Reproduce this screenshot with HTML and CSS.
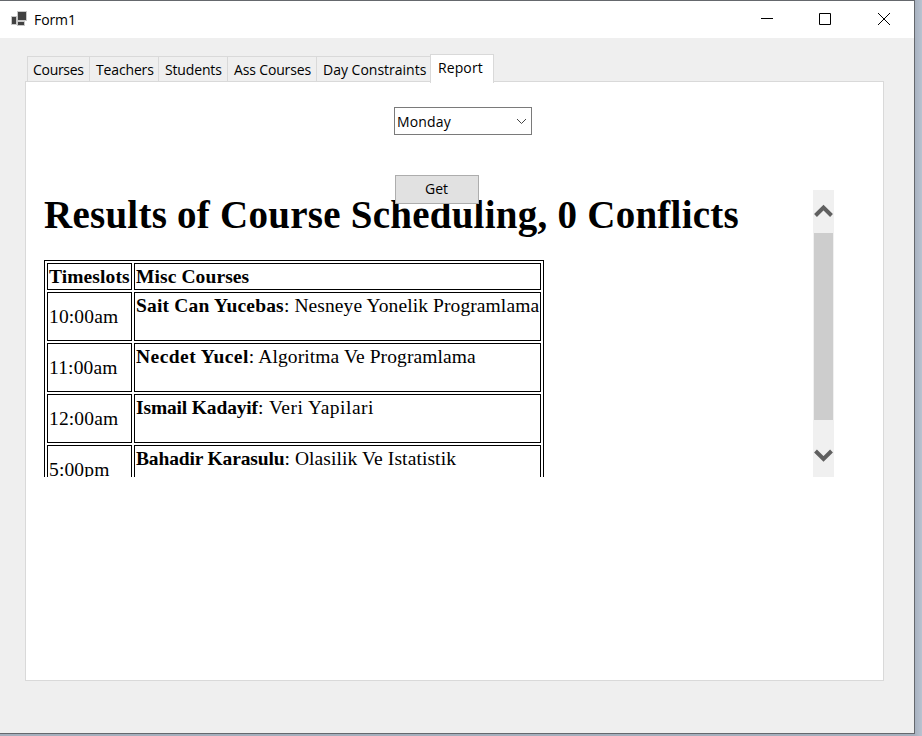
FILE: index.html
```html
<!DOCTYPE html>
<html lang="en">
<head>
<meta charset="utf-8">
<title>Form1</title>
<link rel="stylesheet" href="styles.css">
</head>
<body>
<div class="window">
  <header class="titlebar">
    <svg class="app-icon" width="18" height="16" viewBox="0 0 18 16"><path fill="#c8c8c8" d="M6 0h10v10H6zM0 5h6v9H0zM6 10h8v5H6z"/><path fill="#414141" d="M7 1h8v8H7zM1 6h4v7H1zM7 11h6v3H7z"/></svg>
    <span class="title">Form1</span>
    <svg class="controls" width="130" height="14" viewBox="0 0 130 14" fill="none" stroke="#000"><path d="M0 6.5h12M58.5 1.5h11v11h-11z"/><path d="M117 1l12 12M129 1l-12 12" stroke-width="1"/></svg>
  </header>
  <main class="client">
    <nav class="tabs">
      <div class="tab courses"><span>Courses</span></div>
      <div class="tab teachers"><span>Teachers</span></div>
      <div class="tab students"><span>Students</span></div>
      <div class="tab ass"><span>Ass Courses</span></div>
      <div class="tab day"><span>Day Constraints</span></div>
      <div class="tab active"><span>Report</span></div>
    </nav>
    <section class="panel">
      <div class="select"><span>Monday</span><svg width="11" height="7" viewBox="0 0 11 7" fill="none" stroke="#444"><path d="M1 1l4.5 4.5L10 1"/></svg></div>
      <button class="get">Get</button>
      <div class="browser">
        <div class="document">
          <h1>Results of Course Scheduling, 0 Conflicts</h1>
          <table>
            <colgroup><col class="time-col"><col class="course-col"></colgroup>
            <tr class="head"><td><b>Timeslots</b></td><td><b>Misc Courses</b></td></tr>
            <tr class="nesneye"><td class="time">10:00am</td><td><b>Sait Can Yucebas</b>: Nesneye Yonelik Programlama</td></tr>
            <tr class="algoritma"><td class="time">11:00am</td><td><b>Necdet Yucel</b>: Algoritma Ve Programlama</td></tr>
            <tr class="veri"><td class="time">12:00am</td><td><b>Ismail Kadayif</b>: Veri Yapilari</td></tr>
            <tr class="olasilik"><td class="time">5:00pm</td><td><b>Bahadir Karasulu</b>: Olasilik Ve Istatistik</td></tr>
          </table>
        </div>
        <div class="scrollbar">
          <svg width="21" height="43" viewBox="0 0 21 43"><path d="M2.5 25.5l8-8 8 8" fill="none" stroke="#606060" stroke-width="4"/></svg>
          <div class="thumb"></div>
          <svg width="21" height="57" viewBox="0 0 21 57"><path d="M2.5 31l8 8 8-8" fill="none" stroke="#606060" stroke-width="4"/></svg>
        </div>
      </div>
    </section>
  </main>
</div>
</body>
</html>
```
FILE: styles.css
```css
* { box-sizing: border-box; }
body {
  margin: 0;
  height: 736px;
  overflow: hidden;
  background: linear-gradient(90deg, #a5afbd 914px, #b9c3d1 922px);
  font: 14px/20px "Open Sans", "Noto Sans", sans-serif;
  color: #000;
}
.window {
  width: 915px;
  height: 734px;
  border: 1px solid #65686d;
  border-left: 0;
  background: #efefef;
}
.titlebar {
  height: 37px;
  background: #fff;
  display: flex;
  align-items: flex-start;
  padding: 9px 23px 0 11px;
}
.app-icon { margin-top: 1px; }
.title { margin-left: 5px; letter-spacing: -.1px; }
.controls { margin: 2px 0 0 auto; }
.client { padding: 16px 30px 0 25px; }
.tabs {
  height: 28px;
  display: flex;
  align-items: flex-end;
  padding-left: 2px;
  position: relative;
  margin-bottom: -1px;
}
.tab {
  height: 26px;
  border: 1px solid #d9d9d9;
  border-right: 0;
  border-bottom: 0;
  padding: 3px 0 0 6px;
  white-space: nowrap;
  letter-spacing: -.15px;
}
.courses { width: 62px; padding-left: 5px; letter-spacing: -.3px; }
.teachers { width: 69px; }
.students { width: 69px; }
.ass { width: 89px; }
.day { width: 114px; letter-spacing: 0; }
.tab.active {
  width: 64px;
  height: 29px;
  margin-bottom: -1px;
  border-right: 1px solid #d9d9d9;
  background: #fff;
  padding-left: 7px;
  letter-spacing: .1px;
}
.panel {
  width: 859px;
  height: 600px;
  border: 1px solid #d9d9d9;
  background: #fff;
  padding: 25px 0 0 18px;
}
.select {
  width: 138px;
  height: 28px;
  margin-left: 350px;
  border: 1px solid #7a7a7a;
  display: flex;
  align-items: center;
  justify-content: space-between;
  padding: 1px 4px 0 2px;
  letter-spacing: .15px;
}
.get {
  display: block;
  position: relative;
  z-index: 1;
  width: 84px;
  height: 29px;
  margin: 40px 0 -14px 351px;
  padding: 0 1px 2px 0;
  border: 1px solid #adadad;
  background: #e1e1e1;
  font: inherit;
}
.browser { width: 790px; height: 287px; display: flex; overflow: hidden; }
.document {
  width: 769px;
  height: 287px;
  overflow: hidden;
  font: 19.5px/23px "Liberation Serif", serif;
}
h1 {
  margin: 2px 0 22px;
  font-size: 39px;
  line-height: 46px;
  letter-spacing: .25px;
  white-space: nowrap;
}
table {
  width: 500px;
  table-layout: fixed;
  border: 1px solid #000;
  border-collapse: separate;
  border-spacing: 2px;
}
.time-col { width: 85px; }
.course-col { width: 407px; }
td {
  height: 49px;
  border: 1px solid #000;
  padding: 1px;
  vertical-align: top;
  white-space: nowrap;
  letter-spacing: .1px;
}
.head td { height: 27px; vertical-align: middle; }
td.time { vertical-align: middle; letter-spacing: .15px; }
.nesneye b { letter-spacing: .19px; }
.algoritma b { letter-spacing: .45px; }
.veri td { letter-spacing: .5px; }
.veri b { letter-spacing: -.15px; }
.olasilik b { letter-spacing: -.15px; }
.veri td.time { letter-spacing: .15px; }
.scrollbar {
  width: 21px;
  background: #f0f0f0;
  display: flex;
  flex-direction: column;
}
.thumb { height: 187px; margin: 0 1px; background: #cdcdcd; }
```
